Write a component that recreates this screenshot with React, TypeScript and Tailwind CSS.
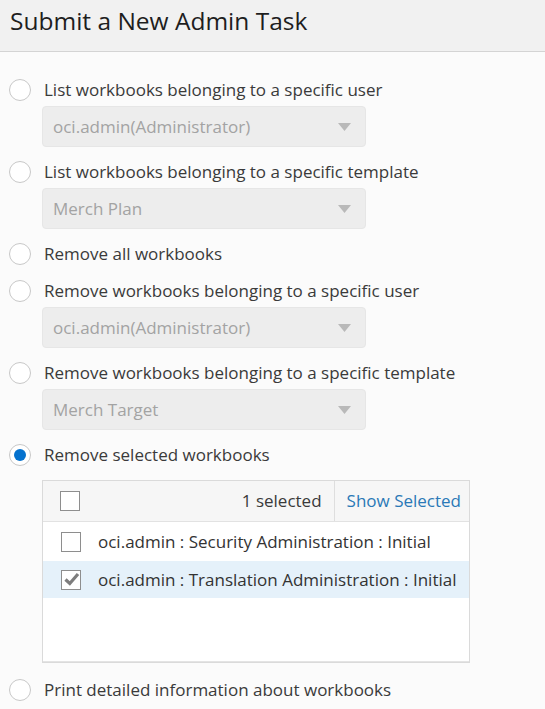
import React from "react";

type Option = {
  label: string;
  select?: string;
  checked?: boolean;
};

const options: Option[] = [
  { label: "List workbooks belonging to a specific user", select: "oci.admin(Administrator)" },
  { label: "List workbooks belonging to a specific template", select: "Merch Plan" },
  { label: "Remove all workbooks" },
  { label: "Remove workbooks belonging to a specific user", select: "oci.admin(Administrator)" },
  { label: "Remove workbooks belonging to a specific template", select: "Merch Target" },
];

const font = { fontFamily: '"Open Sans", "Noto Sans", sans-serif' };

function Radio({ checked }: { checked?: boolean }) {
  return (
    <span className="flex h-[22px] w-[22px] shrink-0 items-center justify-center rounded-full border-[1.5px] border-[#c8c8c8] bg-white">
      {checked && <span className="h-[12px] w-[12px] rounded-full bg-[#0572ce]" />}
    </span>
  );
}

function RadioRow({ label, checked }: { label: string; checked?: boolean }) {
  return (
    <div className="flex h-[32px] items-center gap-[13px]">
      <Radio checked={checked} />
      <span className="text-[17px] text-[#3a3a3a]">{label}</span>
    </div>
  );
}

function DisabledSelect({ value }: { value: string }) {
  return (
    <div className="ml-[33px] mb-[4px] flex h-[41px] w-[324px] items-center justify-between rounded-[4px] border border-[#e6e6e6] bg-[#ededed] pl-[10px] pr-[14px]">
      <span className="text-[17px] text-[#a3a3a3]">{value}</span>
      <svg width="13" height="8" viewBox="0 0 13 8">
        <path d="M0 0 L13 0 L6.5 8 Z" fill="#b9b9b9" />
      </svg>
    </div>
  );
}

function Checkbox({ checked }: { checked?: boolean }) {
  return (
    <span className="flex h-[20px] w-[20px] shrink-0 items-center justify-center border-[1.5px] border-[#8e8e8e] bg-white">
      {checked && (
        <svg width="17" height="17" viewBox="0 0 17 17">
          <path d="M2.5 8.5 L6.8 12.5 L15 3" fill="none" stroke="#7d7d7d" strokeWidth="3.2" strokeLinejoin="miter" />
        </svg>
      )}
    </span>
  );
}

export default function App() {
  return (
    <div className="min-h-[709px] w-[545px] bg-[#fbfbfb]" style={font}>
      <div className="flex h-[52px] items-center border-b border-[#d4d4d4] bg-[#f1f1f1] pb-[8px] pl-[10px]">
        <h1 className="text-[24.5px] text-[#1e1e1e]">Submit a New Admin Task</h1>
      </div>

      <div className="flex flex-col gap-[5px] pl-[9px] pt-[22px]">
        {options.map((o) => (
          <div key={o.label} className="flex flex-col">
            <RadioRow label={o.label} />
            {o.select && <DisabledSelect value={o.select} />}
          </div>
        ))}

        <div className="flex flex-col">
          <RadioRow label="Remove selected workbooks" checked />
          <div className="ml-[33px] mt-[9px] flex h-[183px] w-[428px] flex-col border border-[#dadada] bg-white">
            <div className="flex h-[41px] shrink-0 items-center border-b border-[#e2e2e2] bg-[#f6f6f6]">
              <div className="flex flex-1 items-center justify-between pl-[17px] pr-[12px]">
                <Checkbox />
                <span className="text-[17px] text-[#3a3a3a]">1 selected</span>
              </div>
              <div className="flex h-full items-center border-l border-[#dedede] pl-[12px] pr-[8px]">
                <span className="text-[17px] text-[#2a79b7]">Show Selected</span>
              </div>
            </div>
            <div className="flex h-[39px] shrink-0 items-center gap-[17px] pl-[18px]">
              <Checkbox />
              <span className="text-[17px] text-[#333333]">oci.admin : Security Administration : Initial</span>
            </div>
            <div className="flex h-[37px] shrink-0 items-center gap-[17px] bg-[#e5f1fa] pl-[18px]">
              <Checkbox checked />
              <span className="text-[17px] text-[#333333]">oci.admin : Translation Administration : Initial</span>
            </div>
            <div className="flex-1 border-b border-[#e4e4e4]" />
          </div>
        </div>

        <div className="mt-[6px]">
          <RadioRow label="Print detailed information about workbooks" />
        </div>
      </div>
    </div>
  );
}
